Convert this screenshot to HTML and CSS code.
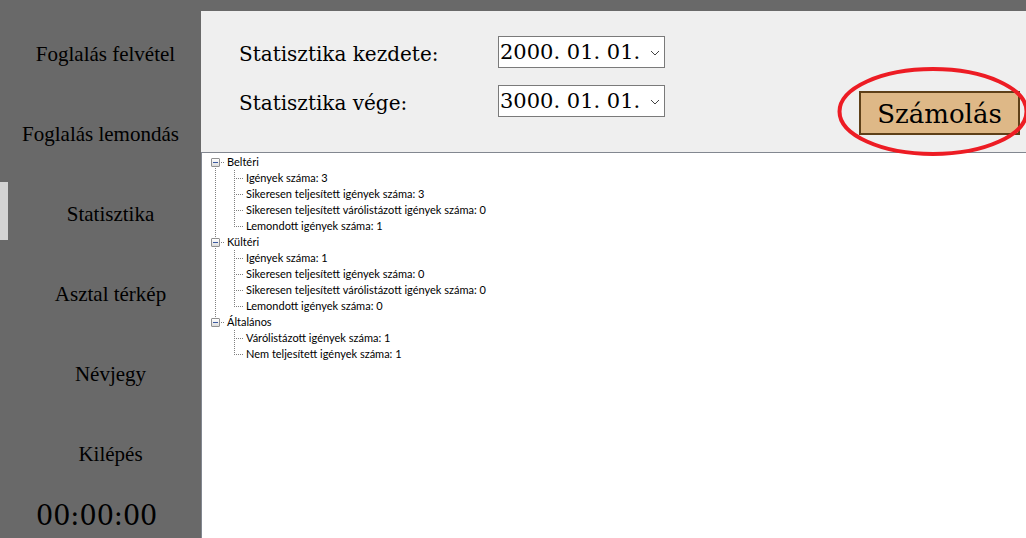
FILE: index.html
```html
<!DOCTYPE html>
<html lang="hu">
<head>
<meta charset="utf-8">
<title>Statisztika</title>
<link rel="stylesheet" href="styles.css">
</head>
<body>
<div class="app">
  <aside class="sidebar">
    <nav class="menu">
      <button class="menu-item menu-item-long" type="button">Foglalás felvétel</button>
      <button class="menu-item menu-item-full" type="button">Foglalás lemondás</button>
      <button class="menu-item menu-item-active" type="button" aria-current="page">Statisztika</button>
      <button class="menu-item" type="button">Asztal térkép</button>
      <button class="menu-item" type="button">Névjegy</button>
      <button class="menu-item" type="button">Kilépés</button>
    </nav>
    <time class="clock">00:00:00</time>
  </aside>
  <main class="content">
    <form class="filters">
      <div class="fields">
        <label for="start">Statisztika kezdete:</label>
        <div class="picker">
          <input id="start" type="text" value="2000. 01. 01.">
          <button class="picker-open" type="button" aria-label="Kezdő dátum választása">
            <svg width="10" height="6" viewBox="0 0 10 6"><path d="M1 1l4 4 4-4"/></svg>
          </button>
        </div>
        <label for="end">Statisztika vége:</label>
        <div class="picker">
          <input id="end" type="text" value="3000. 01. 01.">
          <button class="picker-open" type="button" aria-label="Záró dátum választása">
            <svg width="10" height="6" viewBox="0 0 10 6"><path d="M1 1l4 4 4-4"/></svg>
          </button>
        </div>
      </div>
      <div class="action">
        <button class="calculate" type="button">Számolás</button>
        <svg class="highlight" width="192" height="92" viewBox="0 0 192 92"><ellipse cx="96" cy="45.500" rx="93.500" ry="42.500"/></svg>
      </div>
    </form>
    <ul class="tree">
      <li class="branch">
        <div class="branch-row"><button class="toggle" type="button" aria-label="Beltéri összecsukása"></button><span>Beltéri</span></div>
        <ul class="leaves">
          <li>Igények száma: 3</li>
          <li>Sikeresen teljesített igények száma: 3</li>
          <li>Sikeresen teljesített várólistázott igények száma: 0</li>
          <li>Lemondott igények száma: 1</li>
        </ul>
      </li>
      <li class="branch">
        <div class="branch-row"><button class="toggle" type="button" aria-label="Kültéri összecsukása"></button><span>Kültéri</span></div>
        <ul class="leaves">
          <li>Igények száma: 1</li>
          <li>Sikeresen teljesített igények száma: 0</li>
          <li>Sikeresen teljesített várólistázott igények száma: 0</li>
          <li>Lemondott igények száma: 0</li>
        </ul>
      </li>
      <li class="branch">
        <div class="branch-row"><button class="toggle" type="button" aria-label="Általános összecsukása"></button><span>Általános</span></div>
        <ul class="leaves">
          <li>Várólistázott igények száma: 1</li>
          <li>Nem teljesített igények száma: 1</li>
        </ul>
      </li>
    </ul>
  </main>
</div>
</body>
</html>
```
FILE: styles.css
```css
* { box-sizing: border-box; }

body {
  margin: 0;
  background: #696969;
  color: #000;
  font-family: "DejaVu Serif", serif;
  overflow: hidden;
}

button, input { font: inherit; color: inherit; }

ul { list-style: none; margin: 0; padding: 0; }

.app {
  display: grid;
  grid-template-columns: 201px 1fr;
  min-height: 100vh;
}

.sidebar { padding-top: 14px; }

.menu { display: flex; flex-direction: column; }

.menu-item {
  height: 80px;
  padding: 0 0 0 20px;
  border: 0;
  background: none;
  font-family: "Liberation Serif", serif;
  font-size: 21px;
  text-align: center;
  white-space: nowrap;
}

.menu-item-long { padding-left: 10px; }
.menu-item-full { padding-left: 0; }

.menu-item-active {
  background: linear-gradient(#d3d3d3, #d3d3d3) 0 8px / 8px 58px no-repeat;
}

.clock {
  display: block;
  padding-left: 36px;
  font-size: 27px;
  line-height: 44px;
}

.content {
  display: flex;
  flex-direction: column;
  margin-top: 11px;
}

.filters {
  display: flex;
  justify-content: space-between;
  align-items: flex-start;
  padding: 25px 6px 17px 38px;
  background: #efefef;
}

.fields {
  display: grid;
  grid-template-columns: 259px 167px;
  row-gap: 17px;
  align-items: center;
  font-size: 20px;
}

.fields label { padding-top: 4px; }

.picker {
  display: flex;
  height: 32px;
  border: 1px solid #7a7a7a;
  background: #fff;
}

.picker input {
  flex: 1;
  min-width: 0;
  padding: 0 0 0 1px;
  border: 0;
  background: none;
  font-size: 21px;
}

.picker-open {
  width: 18px;
  padding: 0;
  border: 0;
  background: none;
  line-height: 0;
}

.picker-open path { fill: none; stroke: #444; }

.action {
  position: relative;
  margin-top: 55px;
}

.calculate {
  display: block;
  width: 161px;
  height: 44px;
  padding: 2px 0 0;
  border: 2px solid #5e4019;
  background: #deb887;
  font-size: 26px;
}

.highlight {
  position: absolute;
  left: -22px;
  top: -25px;
  pointer-events: none;
}

.highlight ellipse { fill: none; stroke: #ed1c24; stroke-width: 4; }

.tree {
  flex: 1;
  padding: 1px 0 0;
  border: solid #828790;
  border-width: 1px 0 0 1px;
  background: #fff;
  font-family: Lato, "Liberation Sans", sans-serif;
  font-size: 11px;
  line-height: 16px;
}

.branch {
  background: repeating-linear-gradient(#808080 0 1px, transparent 1px 2px) 13px 0 / 1px 100% no-repeat;
}

.branch:first-child { background-position: 13px 8px; }
.branch:last-child { background-size: 1px 8px; }

.branch-row {
  display: flex;
  align-items: center;
  padding-left: 9px;
  background: repeating-linear-gradient(90deg, #808080 0 1px, transparent 1px 2px) 19px 8px / 4px 1px no-repeat;
}

.toggle {
  width: 9px;
  height: 9px;
  margin-right: 7px;
  padding: 0;
  border: 1px solid #919191;
  border-radius: 1px;
  background:
    linear-gradient(#3c5aa0, #3c5aa0) center / 5px 1px no-repeat,
    linear-gradient(#fff, #dcdcdc);
}

.leaves {
  background: repeating-linear-gradient(#808080 0 1px, transparent 1px 2px) 32px 0 / 1px calc(100% - 7px) no-repeat;
}

.leaves li {
  padding-left: 44px;
  background: repeating-linear-gradient(90deg, #808080 0 1px, transparent 1px 2px) 32px 8px / 9px 1px no-repeat;
}
```
